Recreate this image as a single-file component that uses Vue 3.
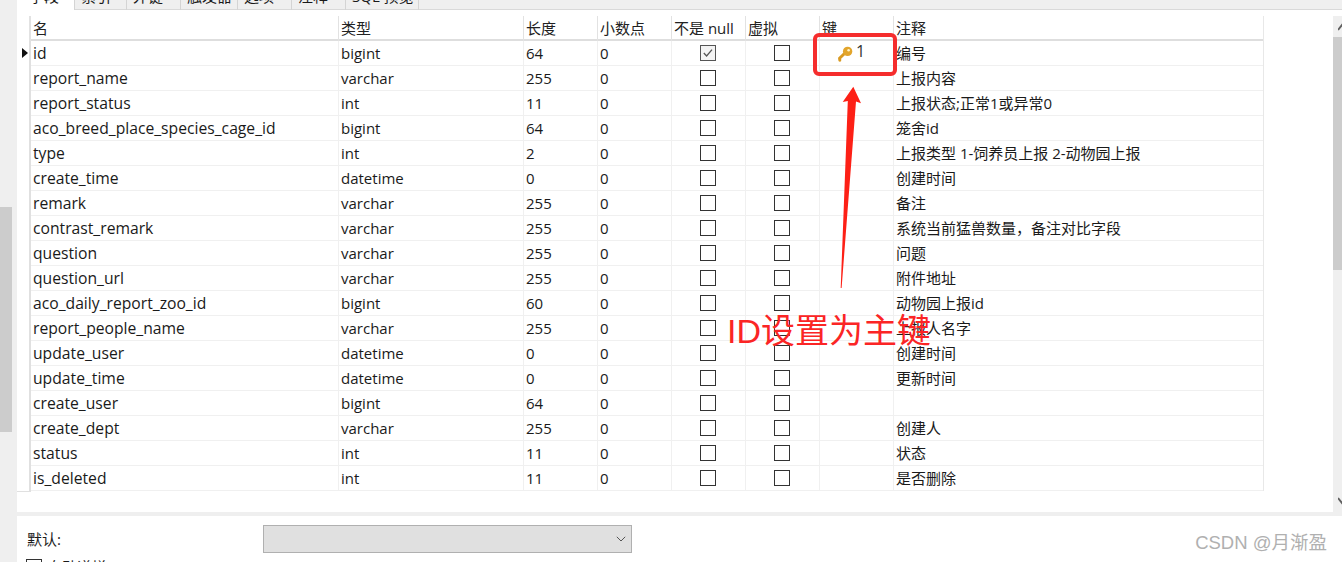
<script setup>
const rows = [
  ['id','bigint','64','0',true,'编号'],
  ['report_name','varchar','255','0',false,'上报内容'],
  ['report_status','int','11','0',false,'上报状态;正常1或异常0'],
  ['aco_breed_place_species_cage_id','bigint','64','0',false,'笼舍id'],
  ['type','int','2','0',false,'上报类型 1-饲养员上报 2-动物园上报'],
  ['create_time','datetime','0','0',false,'创建时间'],
  ['remark','varchar','255','0',false,'备注'],
  ['contrast_remark','varchar','255','0',false,'系统当前猛兽数量，备注对比字段'],
  ['question','varchar','255','0',false,'问题'],
  ['question_url','varchar','255','0',false,'附件地址'],
  ['aco_daily_report_zoo_id','bigint','60','0',false,'动物园上报id'],
  ['report_people_name','varchar','255','0',false,'上报人名字'],
  ['update_user','datetime','0','0',false,'创建时间'],
  ['update_time','datetime','0','0',false,'更新时间'],
  ['create_user','bigint','64','0',false,''],
  ['create_dept','varchar','255','0',false,'创建人'],
  ['status','int','11','0',false,'状态'],
  ['is_deleted','int','11','0',false,'是否删除'],
]
const tabs = [
  { label: '字段', width: 58 },
  { label: '索引', width: 52 },
  { label: '外键', width: 54 },
  { label: '触发器', width: 57 },
  { label: '选项', width: 54 },
  { label: '注释', width: 54 },
  { label: 'SQL 预览', width: 73 },
]
</script>

<template>
  <div class="page">
    <div class="left-rail"><div class="rail-thumb"></div></div>
    <div class="main">
      <div class="tabs">
        <span v-for="(t, i) in tabs" :key="t.label" class="tab" :class="{ active: i === 0 }" :style="{ width: t.width + 'px' }">{{ t.label }}</span>
      </div>
      <div class="grid-area">
        <div class="table">
          <div class="row head">
            <div class="c marker"></div>
            <div class="c name">名</div>
            <div class="c type">类型</div>
            <div class="c len">长度</div>
            <div class="c dec">小数点</div>
            <div class="c nn">不是 null</div>
            <div class="c virt">虚拟</div>
            <div class="c key">键</div>
            <div class="c note">注释</div>
          </div>
          <div v-for="(r, i) in rows" :key="r[0]" class="row">
            <div class="c marker"><span v-if="i === 0" class="tri"></span></div>
            <div class="c name">{{ r[0] }}</div>
            <div class="c type">{{ r[1] }}</div>
            <div class="c len">{{ r[2] }}</div>
            <div class="c dec">{{ r[3] }}</div>
            <div class="c nn center">
              <span class="box" :class="{ on: r[4] }">
                <svg v-if="r[4]" width="14" height="14" viewBox="0 0 14 14"><path d="M2.8 7 5.6 10 11 3.6" fill="none" stroke="#555" stroke-width="1.3"/></svg>
              </span>
            </div>
            <div class="c virt center"><span class="box"></span></div>
            <div class="c key center">
              <div v-if="i === 0" class="keywrap">
                <svg class="keyicon" width="15" height="16" viewBox="0 0 15 16">
                  <path d="M1.8 14.2 1.6 12.3 6 8" fill="none" stroke="#d99a22" stroke-width="3" stroke-linecap="round"/>
                  <circle cx="9.6" cy="5.4" r="4.7" fill="#e2a52c"/>
                  <circle cx="10.6" cy="4.2" r="1.3" fill="#fff3c8"/>
                </svg>
                <span class="keynum">1</span>
              </div>
            </div>
            <div class="c note">{{ r[5] }}</div>
          </div>
        </div>
        <div class="scrollbar">
          <svg class="up" width="9" height="8" viewBox="0 0 9 8"><path d="M0 7 4 2 9 7" fill="none" stroke="#606060" stroke-width="2"/></svg>
          <div class="thumb"></div>
          <svg class="down" width="9" height="8" viewBox="0 0 9 8"><path d="M0 1 4 6 9 1" fill="none" stroke="#606060" stroke-width="2"/></svg>
        </div>
      </div>
      <div class="bottom">
        <div class="field">
          <span class="label">默认:</span>
          <div class="select">
            <svg width="10" height="6" viewBox="0 0 10 6"><path d="M.8.8 5 5 9.2.8" fill="none" stroke="#555" stroke-width="1"/></svg>
          </div>
        </div>
        <div class="check-row"><span class="box small"></span><span class="clip">自动递增</span></div>
      </div>
    </div>

    <svg class="arrow" width="24" height="204" viewBox="0 0 24 204">
      <path d="M13.3.7 21 17.3 16 15.5 1.6 202 .7 202 7.8 15 2.7 16Z" fill="#fd2016"/>
    </svg>
    <div class="callout"></div>
    <div class="annotation">ID设置为主键</div>
    <div class="watermark">CSDN @月渐盈</div>
  </div>
</template>

<style>
html, body { margin: 0; padding: 0; background: #fff; }
</style>

<style scoped>
.page {
  position: relative;
  display: flex;
  width: 1342px;
  height: 562px;
  overflow: hidden;
  background: #fff;
  color: #1a1a1a;
  font: 15px/25px "Open Sans", "Noto Sans CJK SC", sans-serif;
}
.left-rail { position: relative; width: 17px; height: 562px; background: #efefef; flex: none; }
.rail-thumb { width: 12px; height: 225px; position: absolute; left: 0; top: 207px; background: #cccccc; }
.main { flex: 1; min-width: 0; display: flex; flex-direction: column; }
.tabs {
  display: flex;
  height: 10px;
  background: #efefef;
  box-shadow: inset 0 -1px 0 #d9d9d9;
  overflow: hidden;
  flex: none;
}
.tab {
  flex: none;
  height: 26px;
  margin-top: -15px;
  padding: 0 0 0 6px;
  line-height: 22px;
  font-size: 15px;
  border-right: 1px solid #d4d4d4;
  white-space: nowrap;
  box-sizing: border-box;
}
.tab.active { background: #fff; padding-left: 12px; }
.grid-area {
  display: flex;
  height: 502px;
  padding-top: 6px;
  box-sizing: border-box;
  flex: none;
}
.table { width: 1316px; flex: none; }
.row { display: flex; height: 25px; box-sizing: border-box; border-bottom: 1px solid #f0f0f0; width: 1247px; }
.head { border-bottom: 2px solid #dedede; color: #222; }
.c { flex: none; box-sizing: border-box; border-right: 1px solid #f0f0f0; white-space: nowrap; padding-left: 2px; height: 25px; line-height: 25px; font-size: 15px; }
.head .c { border-right-color: #e2e2e2; line-height: 24px; font-size: 15px; }
.marker { width: 14px; padding: 0; position: relative; background: #fff; border-right: 2px solid #e0e0e0; box-shadow: 0 1px 0 #e0e0e0; }
.tri { position: absolute; left: 5px; top: 7px; width: 0; height: 0; border-left: 6px solid #111; border-top: 5px solid transparent; border-bottom: 5px solid transparent; }
.c.name { width: 308px; font-size: 15.7px; }
.head .c.name { font-size: 15px; }
.type { width: 185px; }
.len { width: 74px; }
.dec { width: 74px; }
.nn { width: 74px; }
.virt { width: 74px; }
.key { width: 74px; }
.c.note { width: 370px; line-height: 24px; border-right-color: #e8e8e8; }
.center { display: flex; align-items: center; justify-content: center; padding: 0 2px 2px 0; }
.head .center { display: block; padding: 0 0 0 2px; }
.box { width: 14px; height: 14px; border: 1px solid #333; display: block; background: #fff; flex: none; box-sizing: content-box; }
.box.on { border-color: #555; background: #f4f4f4; }
.box svg { display: block; }
.keywrap { display: flex; align-items: center; margin-left: -8px; }
.keyicon { margin-right: 3px; margin-top: 2px; }
.keynum { color: #333; margin-top: -3px; font-size: 16px; }
.scrollbar { position: relative; width: 9px; background: #efefef; height: 496px; flex: none; overflow: hidden; }
.thumb { position: absolute; left: 0; right: 0; top: 21px; height: 233px; background: #cccccc; }
.up { position: absolute; top: 7px; left: 5px; }
.down { position: absolute; top: 481px; left: 5px; }
.bottom { flex: none; background: #fff; border-top: 4px solid #efefef; padding: 9px 0 0 0; height: 50px; box-sizing: border-box; }
.field { display: flex; align-items: center; height: 28px; padding-left: 10px; }
.label { width: 236px; font-size: 15px; }
.select { width: 369px; height: 28px; background: #e0e0e0; border: 1px solid #b0b0b0; box-sizing: border-box; display: flex; align-items: center; justify-content: flex-end; padding-right: 5px; }
.check-row { display: flex; align-items: flex-start; gap: 5px; padding-left: 9px; margin-top: 6px; height: 16px; font-size: 15px; }
.box.small { width: 14px; height: 14px; }
.clip { line-height: 16px; }
.arrow { position: absolute; left: 840px; top: 86px; }
.callout { position: absolute; left: 813px; top: 33px; width: 84px; height: 43px; border: 4px solid #f52d2d; border-radius: 6px; box-sizing: border-box; }
.annotation { position: absolute; left: 727px; top: 310px; color: #fb2525; font-family: "Liberation Sans", "Noto Sans CJK SC", sans-serif; font-size: 34px; line-height: 42px; white-space: nowrap; }
.watermark { position: absolute; right: 15px; top: 530px; color: #b0b0b0; font-family: "Liberation Sans", "Noto Sans CJK SC", sans-serif; font-size: 18.5px; line-height: 26px; white-space: nowrap; }
</style>
